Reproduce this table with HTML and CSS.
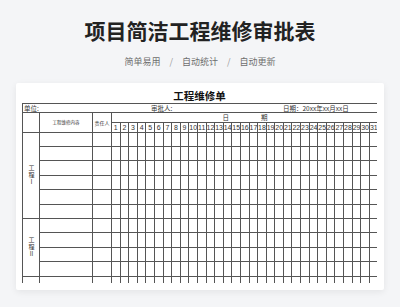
FILE: index.html
```html
<!DOCTYPE html>
<html lang="zh">
<head>
<meta charset="utf-8">
<title>项目简洁工程维修审批表</title>
<link rel="stylesheet" href="styles.css">
</head>
<body>
<header class="hero">
  <h1 class="hero-title">项目简洁工程维修审批表</h1>
  <p class="hero-tags"><span>简单易用</span><span class="sep">/</span><span>自动统计</span><span class="sep">/</span><span>自动更新</span></p>
</header>
<main class="sheet">
  <h2 class="sheet-title">工程维修单</h2>
  <div class="grid-wrap">
    <table class="grid">
      <colgroup>
        <col class="c-group"><col class="c-content"><col class="c-person">
        <col class="c-day"><col class="c-day"><col class="c-day"><col class="c-day"><col class="c-day"><col class="c-day"><col class="c-day"><col class="c-day"><col class="c-day"><col class="c-day">
        <col class="c-day"><col class="c-day"><col class="c-day"><col class="c-day"><col class="c-day"><col class="c-day"><col class="c-day"><col class="c-day"><col class="c-day"><col class="c-day">
        <col class="c-day"><col class="c-day"><col class="c-day"><col class="c-day"><col class="c-day"><col class="c-day"><col class="c-day"><col class="c-day"><col class="c-day"><col class="c-day">
        <col class="c-day">
      </colgroup>
      <tbody>
        <tr class="r-unit">
          <td colspan="34" class="unit-cell"><div class="unit-line"><span>单位:</span><span>审批人:</span><span>日期：20xx年xx月xx日</span></div></td>
        </tr>
        <tr class="r-head">
          <td rowspan="2"></td>
          <td rowspan="2" class="h-content">工程维修内容</td>
          <td rowspan="2" class="h-person">责任人</td>
          <td colspan="31" class="h-date"><span>日</span><span class="date-gap">期</span></td>
        </tr>
        <tr class="r-days">
          <td>1</td><td>2</td><td>3</td><td>4</td><td>5</td><td>6</td><td>7</td><td>8</td><td>9</td><td>10</td>
          <td>11</td><td>12</td><td>13</td><td>14</td><td>15</td><td>16</td><td>17</td><td>18</td><td>19</td><td>20</td>
          <td>21</td><td>22</td><td>23</td><td>24</td><td>25</td><td>26</td><td>27</td><td>28</td><td>29</td><td>30</td>
          <td>31</td>
        </tr>
        <tr class="r-body"><td rowspan="6" class="group"><span class="vtext">工程Ⅰ</span></td>
          <td></td><td></td><td></td><td></td><td></td><td></td><td></td><td></td><td></td><td></td><td></td>
          <td></td><td></td><td></td><td></td><td></td><td></td><td></td><td></td><td></td><td></td><td></td>
          <td></td><td></td><td></td><td></td><td></td><td></td><td></td><td></td><td></td><td></td><td></td></tr>
        <tr class="r-body">
          <td></td><td></td><td></td><td></td><td></td><td></td><td></td><td></td><td></td><td></td><td></td>
          <td></td><td></td><td></td><td></td><td></td><td></td><td></td><td></td><td></td><td></td><td></td>
          <td></td><td></td><td></td><td></td><td></td><td></td><td></td><td></td><td></td><td></td><td></td></tr>
        <tr class="r-body">
          <td></td><td></td><td></td><td></td><td></td><td></td><td></td><td></td><td></td><td></td><td></td>
          <td></td><td></td><td></td><td></td><td></td><td></td><td></td><td></td><td></td><td></td><td></td>
          <td></td><td></td><td></td><td></td><td></td><td></td><td></td><td></td><td></td><td></td><td></td></tr>
        <tr class="r-body">
          <td></td><td></td><td></td><td></td><td></td><td></td><td></td><td></td><td></td><td></td><td></td>
          <td></td><td></td><td></td><td></td><td></td><td></td><td></td><td></td><td></td><td></td><td></td>
          <td></td><td></td><td></td><td></td><td></td><td></td><td></td><td></td><td></td><td></td><td></td></tr>
        <tr class="r-body">
          <td></td><td></td><td></td><td></td><td></td><td></td><td></td><td></td><td></td><td></td><td></td>
          <td></td><td></td><td></td><td></td><td></td><td></td><td></td><td></td><td></td><td></td><td></td>
          <td></td><td></td><td></td><td></td><td></td><td></td><td></td><td></td><td></td><td></td><td></td></tr>
        <tr class="r-body">
          <td></td><td></td><td></td><td></td><td></td><td></td><td></td><td></td><td></td><td></td><td></td>
          <td></td><td></td><td></td><td></td><td></td><td></td><td></td><td></td><td></td><td></td><td></td>
          <td></td><td></td><td></td><td></td><td></td><td></td><td></td><td></td><td></td><td></td><td></td></tr>
        <tr class="r-body"><td rowspan="4" class="group"><span class="vtext">工程Ⅱ</span></td>
          <td></td><td></td><td></td><td></td><td></td><td></td><td></td><td></td><td></td><td></td><td></td>
          <td></td><td></td><td></td><td></td><td></td><td></td><td></td><td></td><td></td><td></td><td></td>
          <td></td><td></td><td></td><td></td><td></td><td></td><td></td><td></td><td></td><td></td><td></td></tr>
        <tr class="r-body">
          <td></td><td></td><td></td><td></td><td></td><td></td><td></td><td></td><td></td><td></td><td></td>
          <td></td><td></td><td></td><td></td><td></td><td></td><td></td><td></td><td></td><td></td><td></td>
          <td></td><td></td><td></td><td></td><td></td><td></td><td></td><td></td><td></td><td></td><td></td></tr>
        <tr class="r-body">
          <td></td><td></td><td></td><td></td><td></td><td></td><td></td><td></td><td></td><td></td><td></td>
          <td></td><td></td><td></td><td></td><td></td><td></td><td></td><td></td><td></td><td></td><td></td>
          <td></td><td></td><td></td><td></td><td></td><td></td><td></td><td></td><td></td><td></td><td></td></tr>
        <tr class="r-body">
          <td></td><td></td><td></td><td></td><td></td><td></td><td></td><td></td><td></td><td></td><td></td>
          <td></td><td></td><td></td><td></td><td></td><td></td><td></td><td></td><td></td><td></td><td></td>
          <td></td><td></td><td></td><td></td><td></td><td></td><td></td><td></td><td></td><td></td><td></td></tr>
        <tr class="r-body"><td rowspan="2" class="group"></td>
          <td></td><td></td><td></td><td></td><td></td><td></td><td></td><td></td><td></td><td></td><td></td>
          <td></td><td></td><td></td><td></td><td></td><td></td><td></td><td></td><td></td><td></td><td></td>
          <td></td><td></td><td></td><td></td><td></td><td></td><td></td><td></td><td></td><td></td><td></td></tr>
        <tr class="r-body">
          <td></td><td></td><td></td><td></td><td></td><td></td><td></td><td></td><td></td><td></td><td></td>
          <td></td><td></td><td></td><td></td><td></td><td></td><td></td><td></td><td></td><td></td><td></td>
          <td></td><td></td><td></td><td></td><td></td><td></td><td></td><td></td><td></td><td></td><td></td></tr>
      </tbody>
    </table>
  </div>
</main>
</body>
</html>
```
FILE: styles.css
```css
* { box-sizing: border-box; }

html, body { margin: 0; padding: 0; }

body {
  width: 400px;
  height: 307px;
  overflow: hidden;
  background: #f4f5f7;
  font-family: "Noto Sans CJK SC", "Noto Sans", sans-serif;
}

.hero {
  text-align: center;
  padding-top: 18px;
}

.hero-title {
  margin: 0;
  font-size: 21px;
  line-height: 24px;
  font-weight: 700;
  color: #222;
}

.hero-tags {
  margin: 14px 0 0;
  font-size: 9px;
  line-height: 12px;
  color: #6e6e6e;
}

.sep {
  margin: 0 9px;
  color: #9a9a9a;
}

.sheet {
  display: block;
  margin: 15px 16px 0;
  padding: 5px 7px 7px 6px;
  background: #fff;
  border-radius: 2px;
  box-shadow: 0 2px 7px rgba(0, 0, 0, 0.07);
}

.sheet-title {
  margin: 0;
  text-align: center;
  font-size: 10.5px;
  line-height: 15px;
  font-weight: 700;
  color: #111;
}

.grid-wrap {
  height: 180px;
  overflow: hidden;
}

.grid {
  width: 356px;
  table-layout: fixed;
  border-collapse: collapse;
  font-family: "Liberation Sans", "Noto Sans CJK SC", sans-serif;
  color: #333;
}

.c-group { width: 17px; }
.c-content { width: 53px; }
.c-person { width: 19px; }
.c-day { width: 8.6px; }

.grid td {
  border: 1px solid #555;
  padding: 0;
  text-align: center;
  vertical-align: middle;
  font-size: 7px;
  line-height: 1;
  white-space: nowrap;
  overflow: hidden;
}

.r-unit { height: 9.3px; }
.r-head { height: 9.4px; }
.r-days { height: 10px; }
.r-body { height: 14.4px; }

.grid td.unit-cell {
  text-align: left;
  font-family: "Noto Sans CJK SC", sans-serif;
  font-size: 6.5px;
}

.unit-line {
  display: grid;
  grid-template-columns: 127px 132px auto;
  padding-left: 1px;
  line-height: 8px;
}

.grid td.h-content {
  font-family: "Noto Sans CJK SC", sans-serif;
  font-size: 4.5px;
}

.grid td.h-person {
  font-family: "Noto Sans CJK SC", sans-serif;
  font-size: 5px;
}

.grid td.h-date {
  font-family: "Noto Sans CJK SC", sans-serif;
  font-size: 6.5px;
}

.date-gap { margin-left: 32px; }

.grid td.group {
  font-family: "Noto Sans CJK SC", sans-serif;
  font-size: 6px;
}

.vtext {
  display: inline-block;
  writing-mode: vertical-rl;
  text-orientation: upright;
  letter-spacing: 0.7px;
  line-height: 6px;
}
```
